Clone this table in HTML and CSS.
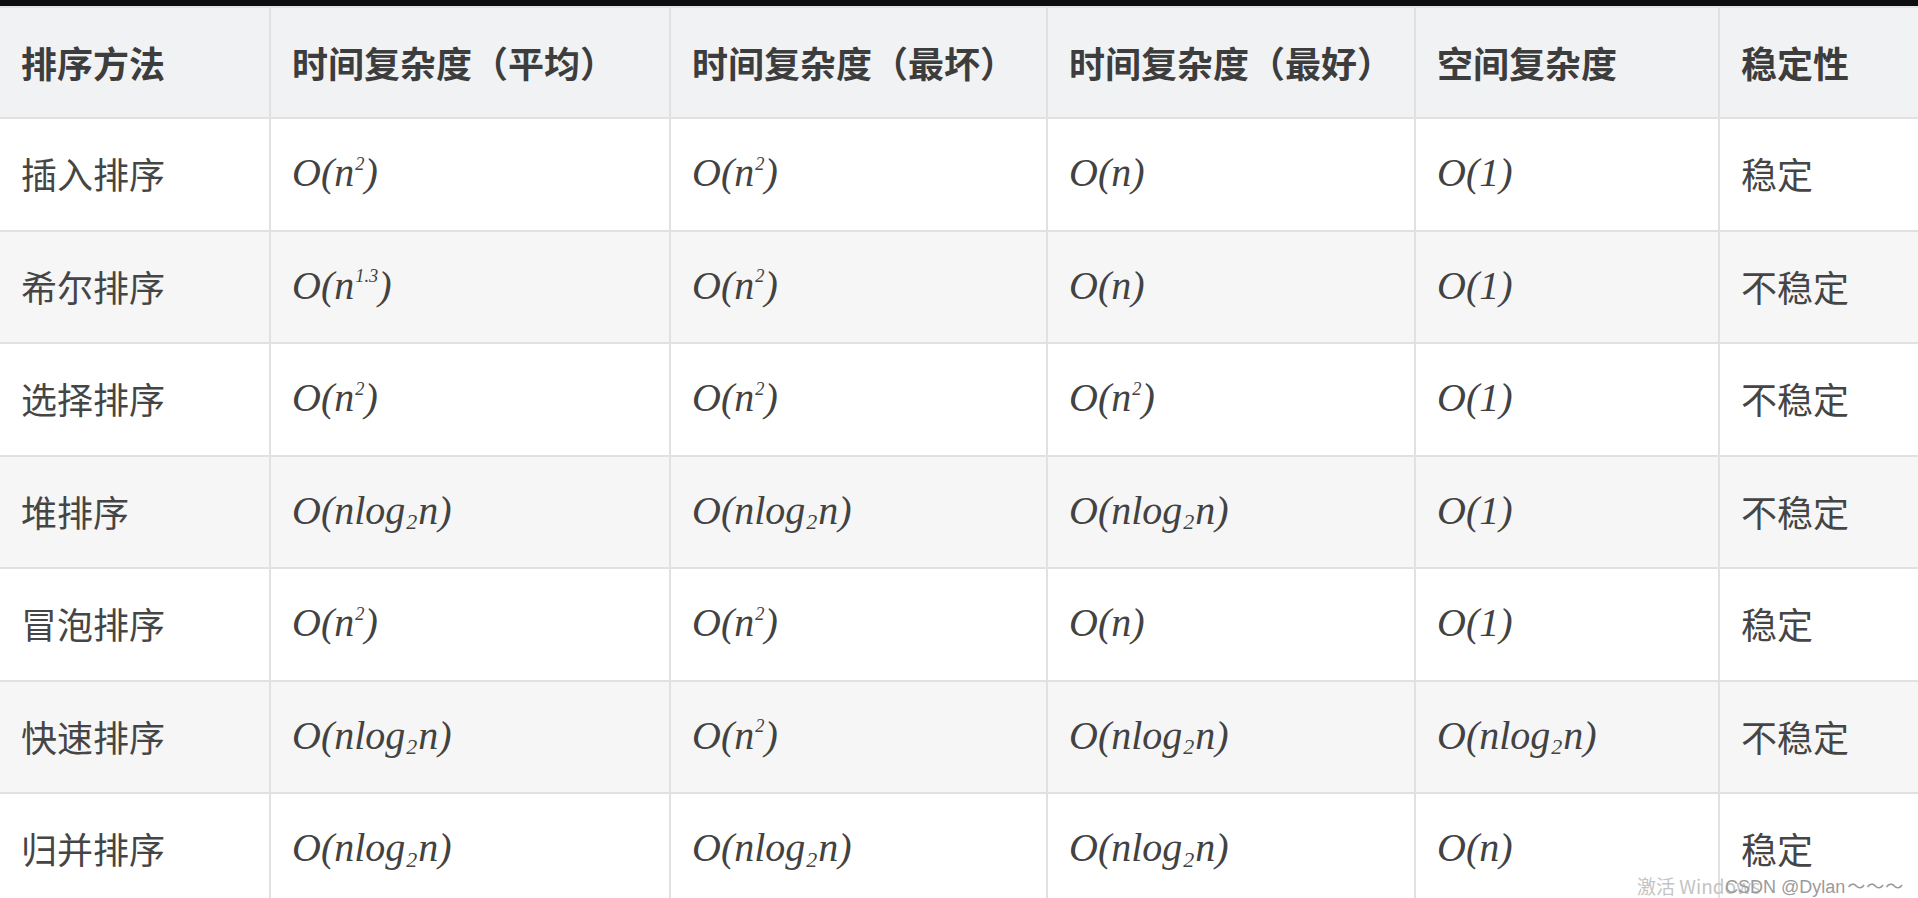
FILE: index.html
```html
<!DOCTYPE html>
<html lang="zh-CN">
<head>
<meta charset="utf-8">
<title>排序算法复杂度</title>
<link rel="stylesheet" href="styles.css">
</head>
<body>
<div class="topbar"></div>
<div class="table">
  <div class="cell head">排序方法</div>
  <div class="cell head">时间复杂度（平均）</div>
  <div class="cell head">时间复杂度（最坏）</div>
  <div class="cell head">时间复杂度（最好）</div>
  <div class="cell head">空间复杂度</div>
  <div class="cell head">稳定性</div>

  <div class="cell">插入排序</div>
  <div class="cell"><span class="math">O(n<sup>2</sup>)</span></div>
  <div class="cell"><span class="math">O(n<sup>2</sup>)</span></div>
  <div class="cell"><span class="math">O(n)</span></div>
  <div class="cell"><span class="math">O(1)</span></div>
  <div class="cell">稳定</div>

  <div class="cell alt">希尔排序</div>
  <div class="cell alt"><span class="math">O(n<sup>1.3</sup>)</span></div>
  <div class="cell alt"><span class="math">O(n<sup>2</sup>)</span></div>
  <div class="cell alt"><span class="math">O(n)</span></div>
  <div class="cell alt"><span class="math">O(1)</span></div>
  <div class="cell alt">不稳定</div>

  <div class="cell">选择排序</div>
  <div class="cell"><span class="math">O(n<sup>2</sup>)</span></div>
  <div class="cell"><span class="math">O(n<sup>2</sup>)</span></div>
  <div class="cell"><span class="math">O(n<sup>2</sup>)</span></div>
  <div class="cell"><span class="math">O(1)</span></div>
  <div class="cell">不稳定</div>

  <div class="cell alt">堆排序</div>
  <div class="cell alt"><span class="math">O(nlog<sub>2</sub>n)</span></div>
  <div class="cell alt"><span class="math">O(nlog<sub>2</sub>n)</span></div>
  <div class="cell alt"><span class="math">O(nlog<sub>2</sub>n)</span></div>
  <div class="cell alt"><span class="math">O(1)</span></div>
  <div class="cell alt">不稳定</div>

  <div class="cell">冒泡排序</div>
  <div class="cell"><span class="math">O(n<sup>2</sup>)</span></div>
  <div class="cell"><span class="math">O(n<sup>2</sup>)</span></div>
  <div class="cell"><span class="math">O(n)</span></div>
  <div class="cell"><span class="math">O(1)</span></div>
  <div class="cell">稳定</div>

  <div class="cell alt">快速排序</div>
  <div class="cell alt"><span class="math">O(nlog<sub>2</sub>n)</span></div>
  <div class="cell alt"><span class="math">O(n<sup>2</sup>)</span></div>
  <div class="cell alt"><span class="math">O(nlog<sub>2</sub>n)</span></div>
  <div class="cell alt"><span class="math">O(nlog<sub>2</sub>n)</span></div>
  <div class="cell alt">不稳定</div>

  <div class="cell">归并排序</div>
  <div class="cell"><span class="math">O(nlog<sub>2</sub>n)</span></div>
  <div class="cell"><span class="math">O(nlog<sub>2</sub>n)</span></div>
  <div class="cell"><span class="math">O(nlog<sub>2</sub>n)</span></div>
  <div class="cell"><span class="math">O(n)</span></div>
  <div class="cell">稳定</div>
</div>
<div class="watermark-win">激活 Windows</div>
<div class="watermark-csdn">CSDN @Dylan<span class="tildes">～～～</span></div>
</body>
</html>
```

FILE: styles.css
```css
html, body {
  margin: 0;
  padding: 0;
  background: #ffffff;
  overflow: hidden;
  width: 1918px;
  height: 898px;
}

body {
  position: relative;
  font-family: "Noto Sans CJK SC", "Noto Sans", sans-serif;
  color: #444444;
}

.topbar {
  height: 6px;
  background: #0e0e0e;
}

.table {
  display: grid;
  grid-template-columns: 271px 400px 377px 368px 304px 240px;
  grid-template-rows: 113px;
  grid-auto-rows: 112.5px;
  width: 1960px;
}

.cell {
  box-sizing: border-box;
  display: flex;
  align-items: center;
  padding: 0 20px 2px 21px;
  border-right: 2px solid #e1e1e1;
  border-bottom: 2px solid #e1e1e1;
  background: #ffffff;
  font-size: 36px;
  line-height: 1;
  white-space: nowrap;
  color: #454545;
}

.cell.alt {
  background: #f6f6f6;
}

.cell.head {
  background: #f1f2f4;
  border-top: 2px solid #e4e5e7;
  font-weight: 700;
  color: #3d3d3d;
}

.math {
  font-family: "Liberation Serif", "Times New Roman", serif;
  font-style: italic;
  font-size: 40px;
  color: #424242;
  line-height: 1;
}

.math sup {
  font-size: 0.46em;
  vertical-align: 0.9em;
  line-height: 0;
  margin-left: 1px;
}

.math sub {
  font-size: 0.55em;
  vertical-align: -0.25em;
  line-height: 0;
  margin: 0 1px;
}

.watermark-win {
  position: absolute;
  left: 1637px;
  top: 874px;
  font-family: "Noto Sans CJK SC", "Liberation Sans", sans-serif;
  font-size: 19px;
  line-height: 24px;
  color: #c4c4c4;
}

.watermark-csdn {
  position: absolute;
  left: 1725px;
  top: 873px;
  font-family: "Liberation Sans", "Noto Sans CJK SC", sans-serif;
  font-size: 18px;
  line-height: 24px;
  color: #9a9a9a;
}

.tildes {
  font-family: "Noto Sans CJK SC", sans-serif;
  letter-spacing: 1px;
  margin-left: 2px;
}
```
